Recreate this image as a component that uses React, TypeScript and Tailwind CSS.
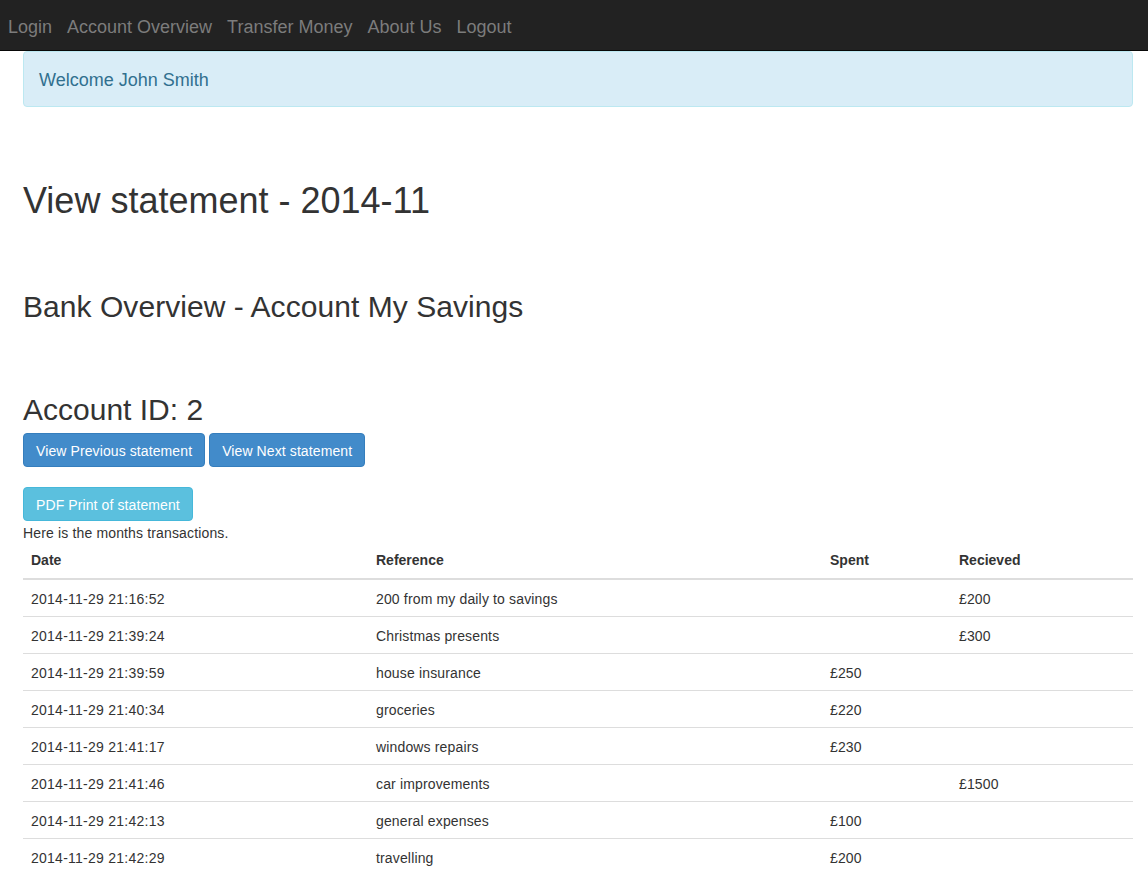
import React from "react";

const rows = [
  ["2014-11-29 21:16:52", "200 from my daily to savings", "", "£200"],
  ["2014-11-29 21:39:24", "Christmas presents", "", "£300"],
  ["2014-11-29 21:39:59", "house insurance", "£250", ""],
  ["2014-11-29 21:40:34", "groceries", "£220", ""],
  ["2014-11-29 21:41:17", "windows repairs", "£230", ""],
  ["2014-11-29 21:41:46", "car improvements", "", "£1500"],
  ["2014-11-29 21:42:13", "general expenses", "£100", ""],
  ["2014-11-29 21:42:29", "travelling", "£200", ""],
];

export default function App() {
  return (
    <div className="min-h-screen bg-white text-[#333] text-[14px] leading-[20px]" style={{ fontFamily: '"Liberation Sans", Arial, sans-serif' }}>
      <nav className="h-[51px] bg-[#222] border-b border-[#080808] flex items-center pt-[4px] pl-[8px] gap-[15px] text-[18px] text-[#7c7c7c]">
        <span>Login</span>
        <span>Account Overview</span>
        <span>Transfer Money</span>
        <span>About Us</span>
        <span>Logout</span>
      </nav>
      <div className="pl-[23px] pr-[15px]">
        <div className="h-[56px] bg-[#d9edf7] border border-[#bce8f1] rounded-[4px] text-[#31708f] text-[18px] px-[15px] pt-[1px] flex items-center">
          Welcome John Smith
        </div>
        <h1 className="mt-[74px] text-[36px] leading-[40px] font-normal">View statement - 2014-11</h1>
        <h2 className="mt-[69px] text-[30px] leading-[33px] font-normal tracking-[0.05px]">Bank Overview - Account My Savings</h2>
        <h2 className="mt-[70px] text-[30px] leading-[33px] font-normal">Account ID: 2</h2>
        <div className="mt-[7px] flex gap-[4px] tracking-[0.1px]">
          <button className="pt-[7px] pb-[5px] leading-[20px] px-[12px] bg-[#428bca] border border-[#357ebd] rounded-[4px] text-white text-[14px]">View Previous statement</button>
          <button className="pt-[7px] pb-[5px] leading-[20px] px-[12px] bg-[#428bca] border border-[#357ebd] rounded-[4px] text-white text-[14px]">View Next statement</button>
        </div>
        <div className="mt-[20px] tracking-[0.1px]">
          <button className="pt-[7px] pb-[5px] leading-[20px] px-[12px] bg-[#5bc0de] border border-[#46b8da] rounded-[4px] text-white text-[14px]">PDF Print of statement</button>
        </div>
        <p className="mt-[2px] tracking-[0.15px]">Here is the months transactions.</p>
        <table className="w-full border-collapse text-left -mt-[1px]">
          <thead>
            <tr className="border-b-2 border-[#ddd]">
              <th className="w-[345px] p-[8px] font-bold">Date</th>
              <th className="w-[454px] p-[8px] font-bold">Reference</th>
              <th className="w-[129px] p-[8px] font-bold">Spent</th>
              <th className="p-[8px] font-bold">Recieved</th>
            </tr>
          </thead>
          <tbody>
            {rows.map((r, i) => (
              <tr key={i} className="border-t border-[#ddd]">
                <td className="pt-[9px] pb-[7px] px-[8px] tracking-[0.25px]">{r[0]}</td>
                <td className="pt-[9px] pb-[7px] px-[8px] tracking-[0.15px]">{r[1]}</td>
                <td className="pt-[9px] pb-[7px] px-[8px] tracking-[0.15px]">{r[2]}</td>
                <td className="pt-[9px] pb-[7px] px-[8px] tracking-[0.15px]">{r[3]}</td>
              </tr>
            ))}
          </tbody>
        </table>
      </div>
    </div>
  );
}
